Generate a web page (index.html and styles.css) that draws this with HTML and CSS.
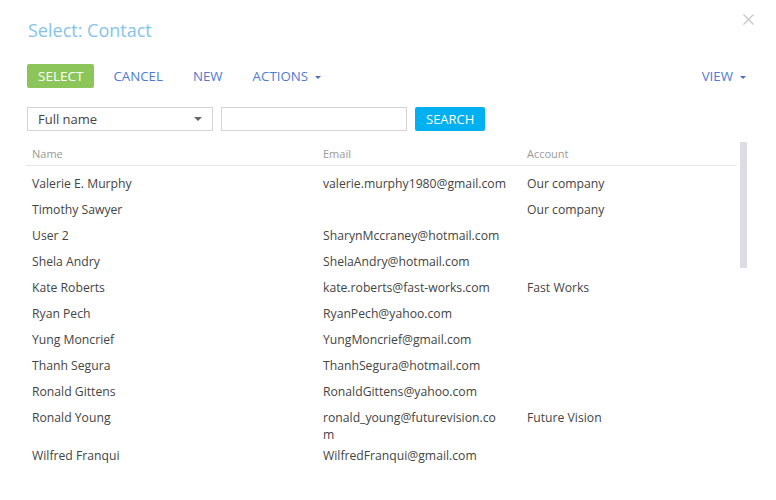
FILE: index.html
```html
<!DOCTYPE html>
<html lang="en">
<head>
  <meta charset="UTF-8" />
  <title>Select: Contact</title>
  <link rel="stylesheet" href="styles.css">
</head>
<body>

  <div class="dialog">
    <div class="dialog-header">
      <h2>Select: Contact</h2>
      <span class="close-button">
        <svg width="11" height="11" viewBox="0 0 11 11"><path d="M0.5 0.5 L10.5 10.5 M10.5 0.5 L0.5 10.5" stroke="#c4c4c4" stroke-width="1.2" fill="none"/></svg>
      </span>
    </div>

    <div class="toolbar">
      <div class="toolbar-left">
        <button class="btn-select">SELECT</button>
        <a class="tool-link" href="#">CANCEL</a>
        <a class="tool-link" href="#">NEW</a>
        <a class="tool-link" href="#">ACTIONS<span class="caret"></span></a>
      </div>
      <a class="tool-link view-link" href="#">VIEW<span class="caret"></span></a>
    </div>

    <div class="filter-row">
      <div class="combo">
        <span>Full name</span>
        <span class="combo-caret"></span>
      </div>
      <input class="search-input" type="text" />
      <button class="btn-search">SEARCH</button>
    </div>

    <div class="grid-wrap">
      <div class="grid">
        <div class="grid-head">
          <div class="col-name">Name</div>
          <div class="col-email">Email</div>
          <div class="col-account">Account</div>
        </div>
        <div class="grid-body" id="grid-body"></div>
      </div>
      <div class="scrollbar"><div class="scroll-thumb"></div></div>
    </div>
  </div>

  <script>
    const contacts = [
      ['Valerie E. Murphy', 'valerie.murphy1980@gmail.com', 'Our company'],
      ['Timothy Sawyer', '', 'Our company'],
      ['User 2', 'SharynMccraney@hotmail.com', ''],
      ['Shela Andry', 'ShelaAndry@hotmail.com', ''],
      ['Kate Roberts', 'kate.roberts@fast-works.com', 'Fast Works'],
      ['Ryan Pech', 'RyanPech@yahoo.com', ''],
      ['Yung Moncrief', 'YungMoncrief@gmail.com', ''],
      ['Thanh Segura', 'ThanhSegura@hotmail.com', ''],
      ['Ronald Gittens', 'RonaldGittens@yahoo.com', ''],
      ['Ronald Young', 'ronald_young@futurevision.co<br>m', 'Future Vision'],
      ['Wilfred Franqui', 'WilfredFranqui@gmail.com', '']
    ];

    const body = document.getElementById('grid-body');
    for (let c of contacts) {
      const row = document.createElement('div');
      row.className = 'grid-row';
      row.innerHTML = `<div class="col-name">${c[0]}</div><div class="col-email">${c[1]}</div><div class="col-account">${c[2]}</div>`;
      body.appendChild(row);
    }
  </script>
</body>
</html>
```

FILE: styles.css
```css
body {
  margin: 0;
  background-color: #ffffff;
  font-family: 'Open Sans', sans-serif;
  color: #444444;
}

.dialog {
  padding: 0 28px 0 26px;
}

.dialog-header {
  display: flex;
  justify-content: space-between;
  align-items: flex-start;
  height: 64px;
}

.dialog-header h2 {
  margin: 18px 0 0 2px;
  font-size: 18px;
  font-weight: normal;
  line-height: 24px;
  color: #86c4e6;
}

.close-button {
  margin-top: 14px;
  margin-right: -6px;
  line-height: 0;
}

.toolbar {
  display: flex;
  justify-content: space-between;
  align-items: center;
  height: 24px;
}

.toolbar-left {
  display: flex;
  align-items: center;
  gap: 30px;
}

.btn-select {
  height: 24px;
  padding: 0 11px;
  margin-left: 1px;
  margin-right: -11px;
  background-color: #8cc65b;
  color: white;
  border: none;
  border-radius: 2px;
  font-family: 'Open Sans', sans-serif;
  font-size: 13.5px;
}

.tool-link {
  color: #4f7bd2;
  text-decoration: none;
  font-size: 13.3px;
}

.view-link {
  margin-right: 2px;
}

.caret {
  display: inline-block;
  width: 0;
  height: 0;
  margin-left: 7px;
  vertical-align: middle;
  border-left: 3px solid transparent;
  border-right: 3px solid transparent;
  border-top: 3.5px solid #4a6fc2;
}

.filter-row {
  display: flex;
  align-items: center;
  gap: 8px;
  margin-top: 19px;
  margin-left: 1px;
}

.combo {
  box-sizing: border-box;
  width: 186px;
  height: 24px;
  padding: 0 10px 0 10px;
  border: 1px solid #d4d4d4;
  display: flex;
  align-items: center;
  justify-content: space-between;
  font-size: 13px;
  color: #444444;
}

.combo-caret {
  width: 0;
  height: 0;
  border-left: 4px solid transparent;
  border-right: 4px solid transparent;
  border-top: 4px solid #666666;
}

.search-input {
  box-sizing: border-box;
  width: 186px;
  height: 24px;
  border: 1px solid #d4d4d4;
  margin: 0;
}

.btn-search {
  height: 24px;
  padding: 0 11px;
  background-color: #01b0f0;
  color: white;
  border: none;
  border-radius: 2px;
  font-family: 'Open Sans', sans-serif;
  font-size: 13px;
}

.grid-wrap {
  display: flex;
  margin-top: 11px;
}

.grid {
  width: 711px;
}

.grid-head {
  display: flex;
  height: 23px;
  align-items: center;
  border-bottom: 1px solid #e4e4e4;
  font-size: 11px;
  color: #999999;
}

.grid-body {
  padding-top: 5px;
}

.grid-row {
  display: flex;
  align-items: flex-start;
  box-sizing: border-box;
  min-height: 26px;
  padding-top: 4px;
  font-size: 12.2px;
  line-height: 17px;
}

.col-name {
  width: 291px;
  padding-left: 6px;
  box-sizing: border-box;
}

.col-email {
  width: 204px;
  padding: 0 6px;
  box-sizing: border-box;
}

.col-account {
  flex: 1;
  padding-left: 6px;
}

.scrollbar {
  margin-left: 3px;
  width: 7px;
}

.scroll-thumb {
  height: 126px;
  background-color: #dcdce2;
}
```
